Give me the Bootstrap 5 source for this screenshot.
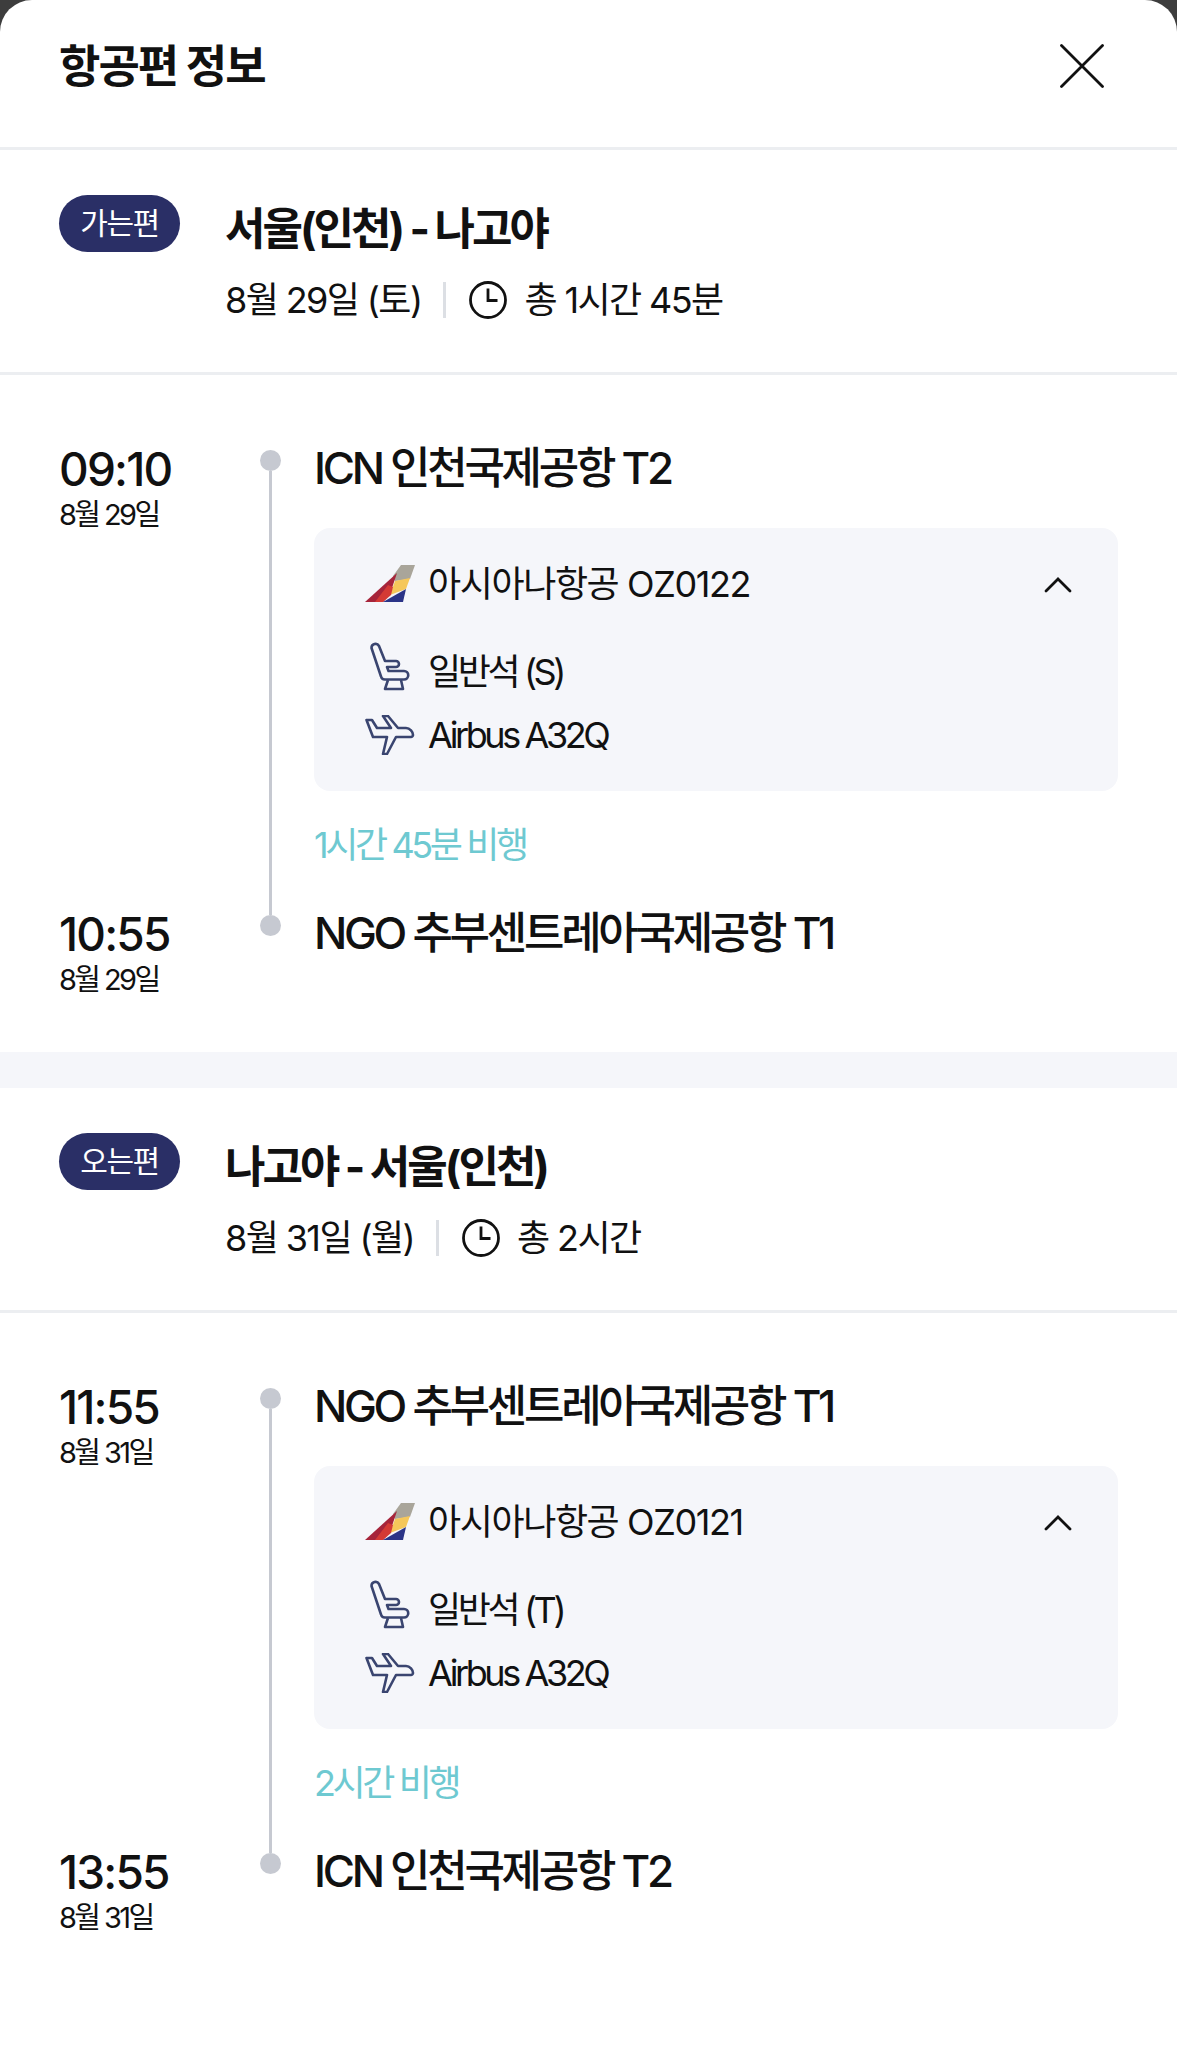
<!DOCTYPE html>
<html lang="ko">
<head>
    <meta charset="UTF-8">
    <title>항공편 정보</title>
    <link rel="stylesheet" href="https://cdn.jsdelivr.net/npm/bootstrap@5.3.3/dist/css/bootstrap.min.css">
    <script src="https://cdn.jsdelivr.net/npm/bootstrap@5.3.3/dist/js/bootstrap.bundle.min.js"></script>
    <style>
        body {
            background: #3d3d3d;
            font-family: Inter, "Noto Sans CJK KR", sans-serif;
            color: #111;
        }
        .sheet {
            background: #fff;
            border-radius: 32px 32px 0 0;
            min-height: 2058px;
        }
        .sheet-head {
            height: 150px;
            padding: 0 59px;
            border-bottom: 3px solid #eceef1;
        }
        .sheet-title {
            font-size: 45px;
            font-weight: 700;
            letter-spacing: -2px;
            margin: 0 0 14px;
        }
        .close-x {
            width: 44px;
            height: 44px;
            margin-right: 14px;
            margin-bottom: 16px;
        }
        .trip-head {
            height: 225px;
            padding: 45px 59px 0;
            border-bottom: 3px solid #eceef1;
            gap: 45px;
        }
        .trip-tag {
            width: 121px;
            height: 57px;
            background: #2a2f66;
            color: #fff;
            border-radius: 29px;
            font-size: 30px;
            letter-spacing: -1.5px;
            flex-shrink: 0;
        }
        .trip-route {
            font-size: 44px;
            font-weight: 700;
            letter-spacing: -3px;
            line-height: 60px;
            margin-top: 4px;
        }
        .trip-meta {
            font-size: 36px;
            letter-spacing: -1.6px;
            line-height: 50px;
            margin-top: 16px;
        }
        .meta-bar {
            width: 3px;
            height: 36px;
            background: #dcdfe4;
            margin: 0 22px;
        }
        .clock {
            width: 40px;
            height: 40px;
            margin-right: 16px;
        }
        .flight-grid {
            display: grid;
            grid-template-columns: 196px 30px 1fr;
            padding: 0 59px;
        }
        .flight-grid.top-gap {
            padding-top: 66px;
        }
        .time-big {
            font-size: 46px;
            font-weight: 500;
            letter-spacing: -1.8px;
            line-height: 56px;
        }
        .time-date {
            font-size: 29px;
            letter-spacing: -2.6px;
            line-height: 36px;
        }
        .rail {
            display: flex;
            flex-direction: column;
            align-items: center;
            padding-top: 9px;
        }
        .rail-dot {
            width: 21px;
            height: 21px;
            border-radius: 50%;
            background: #c6c9d1;
            flex-shrink: 0;
        }
        .rail-line {
            width: 3px;
            flex-grow: 1;
            background: #c6c9d1;
        }
        .rail-line.rail-stub {
            flex-grow: 0;
            height: 9px;
        }
        .stop-cell {
            padding-left: 29px;
        }
        .airport {
            font-size: 44px;
            font-weight: 500;
            letter-spacing: -3.3px;
            line-height: 54px;
        }
        .leg-box {
            background: #f5f6fa;
            border-radius: 16px;
            height: 263px;
            margin-top: 33px;
            padding: 31px 45px 0 51px;
        }
        .leg-line {
            font-size: 36px;
            letter-spacing: -1.4px;
            line-height: 50px;
        }
        .leg-spec {
            letter-spacing: -3.4px;
            margin-top: 13px;
        }
        .leg-spec.spec-first {
            margin-top: 38px;
        }
        .leg-icon {
            width: 50px;
            flex-shrink: 0;
            margin-right: 13px;
        }
        .leg-icon.seat-icon {
            margin-top: -12px;
        }
        .leg-toggle {
            margin-top: 2px;
            margin-right: 1px;
        }
        .leg-duration {
            color: #6ec9d1;
            font-size: 36px;
            letter-spacing: -3.4px;
            line-height: 50px;
            margin-top: 29px;
            margin-bottom: 36px;
        }
        .band {
            height: 36px;
            background: #f5f6fa;
            margin-top: 54px;
        }
    </style>
</head>
<body>
    <svg class="d-none">
        <symbol id="ic-clock" viewBox="0 0 40 40">
            <circle cx="20" cy="20" r="17.500" fill="none" stroke="#111" stroke-width="2.800"/>
            <path d="M20 8.500v12h9.500" fill="none" stroke="#111" stroke-width="2.800"/>
        </symbol>
        <symbol id="ic-logo" viewBox="5 7 50 38">
            <polygon points="41,7 55,7 50,21 35,23 33,18" fill="#a9a59a"/>
            <polygon points="35,23 50,20 46,31 30,37" fill="#f5c75a"/>
            <polygon points="5,44 37,15 30,36 23,44" fill="#a6243a"/>
            <polygon points="15,44 28,27 33,29 31,37 23,44" fill="#d43a35"/>
            <polygon points="23,44 46,31 43,44" fill="#2b3487"/>
        </symbol>
        <symbol id="ic-seat" viewBox="8 6 42 50">
            <path d="M10.500 13a4 4 0 0 1 7.500-2L24 26H35a3 3 0 0 1 0 6H26L27.500 36H43a4 4 0 0 1 0 8.500H24a4 4 0 0 1-4-3z" fill="none" stroke="#3a4570" stroke-width="2.600" stroke-linejoin="round"/>
            <path d="M27 45l-3 9h18l-2-9" fill="none" stroke="#3a4570" stroke-width="2.600" stroke-linejoin="round"/>
        </symbol>
        <symbol id="ic-plane" viewBox="6 82 48 40">
            <path d="M6.500 87H12l5 8H31L23 83h5L38 95h8c4 0 7 4 7 7 0 1-1 2-2 2H36L27 121H23L27 104H13z" fill="none" stroke="#3a4570" stroke-width="2.600" stroke-linejoin="round"/>
        </symbol>
    </svg>

    <div class="sheet">
        <header class="sheet-head d-flex align-items-center justify-content-between">
            <h1 class="sheet-title">항공편 정보</h1>
            <svg class="close-x" viewBox="0 0 44 44">
                <path d="M1.500 1.500l41 41M42.500 1.500l-41 41" stroke="#111" stroke-width="2.800" stroke-linecap="round"/>
            </svg>
        </header>

        <section class="trip-head d-flex align-items-start">
            <div class="trip-tag d-flex align-items-center justify-content-center">가는편</div>
            <div>
                <div class="trip-route">서울(인천) - 나고야</div>
                <div class="trip-meta d-flex align-items-center">
                    <span>8월 29일 (토)</span>
                    <span class="meta-bar"></span>
                    <svg class="clock"><use href="#ic-clock"/></svg>
                    <span>총 1시간 45분</span>
                </div>
            </div>
        </section>

        <section class="flight-grid top-gap">
            <div>
                <div class="time-big">09:10</div>
                <div class="time-date">8월 29일</div>
            </div>
            <div class="rail">
                <span class="rail-dot"></span>
                <span class="rail-line"></span>
            </div>
            <div class="stop-cell">
                <div class="airport">ICN 인천국제공항 T2</div>
                <div class="leg-box">
                    <div class="leg-line d-flex align-items-center">
                        <svg class="leg-icon" height="38"><use href="#ic-logo"/></svg>
                        <span>아시아나항공 OZ0122</span>
                        <svg class="leg-toggle ms-auto" width="28" height="18" viewBox="0 0 28 18"><path d="M2 15L14 3l12 12" fill="none" stroke="#111" stroke-width="2.800" stroke-linecap="round"/></svg>
                    </div>
                    <div class="leg-line leg-spec spec-first d-flex align-items-center">
                        <svg class="leg-icon seat-icon" height="50"><use href="#ic-seat"/></svg>
                        <span>일반석 (S)</span>
                    </div>
                    <div class="leg-line leg-spec d-flex align-items-center">
                        <svg class="leg-icon" height="40"><use href="#ic-plane"/></svg>
                        <span>Airbus A32Q</span>
                    </div>
                </div>
                <div class="leg-duration">1시간 45분 비행</div>
            </div>
            <div>
                <div class="time-big">10:55</div>
                <div class="time-date">8월 29일</div>
            </div>
            <div class="rail pt-0">
                <span class="rail-line rail-stub"></span>
                <span class="rail-dot"></span>
            </div>
            <div class="stop-cell">
                <div class="airport">NGO 추부센트레아국제공항 T1</div>
            </div>
        </section>

        <div class="band"></div>

        <section class="trip-head d-flex align-items-start">
            <div class="trip-tag d-flex align-items-center justify-content-center">오는편</div>
            <div>
                <div class="trip-route">나고야 - 서울(인천)</div>
                <div class="trip-meta d-flex align-items-center">
                    <span>8월 31일 (월)</span>
                    <span class="meta-bar"></span>
                    <svg class="clock"><use href="#ic-clock"/></svg>
                    <span>총 2시간</span>
                </div>
            </div>
        </section>

        <section class="flight-grid top-gap">
            <div>
                <div class="time-big">11:55</div>
                <div class="time-date">8월 31일</div>
            </div>
            <div class="rail">
                <span class="rail-dot"></span>
                <span class="rail-line"></span>
            </div>
            <div class="stop-cell">
                <div class="airport">NGO 추부센트레아국제공항 T1</div>
                <div class="leg-box">
                    <div class="leg-line d-flex align-items-center">
                        <svg class="leg-icon" height="38"><use href="#ic-logo"/></svg>
                        <span>아시아나항공 OZ0121</span>
                        <svg class="leg-toggle ms-auto" width="28" height="18" viewBox="0 0 28 18"><path d="M2 15L14 3l12 12" fill="none" stroke="#111" stroke-width="2.800" stroke-linecap="round"/></svg>
                    </div>
                    <div class="leg-line leg-spec spec-first d-flex align-items-center">
                        <svg class="leg-icon seat-icon" height="50"><use href="#ic-seat"/></svg>
                        <span>일반석 (T)</span>
                    </div>
                    <div class="leg-line leg-spec d-flex align-items-center">
                        <svg class="leg-icon" height="40"><use href="#ic-plane"/></svg>
                        <span>Airbus A32Q</span>
                    </div>
                </div>
                <div class="leg-duration">2시간 비행</div>
            </div>
            <div>
                <div class="time-big">13:55</div>
                <div class="time-date">8월 31일</div>
            </div>
            <div class="rail pt-0">
                <span class="rail-line rail-stub"></span>
                <span class="rail-dot"></span>
            </div>
            <div class="stop-cell">
                <div class="airport">ICN 인천국제공항 T2</div>
            </div>
        </section>
    </div>
</body>
</html>
